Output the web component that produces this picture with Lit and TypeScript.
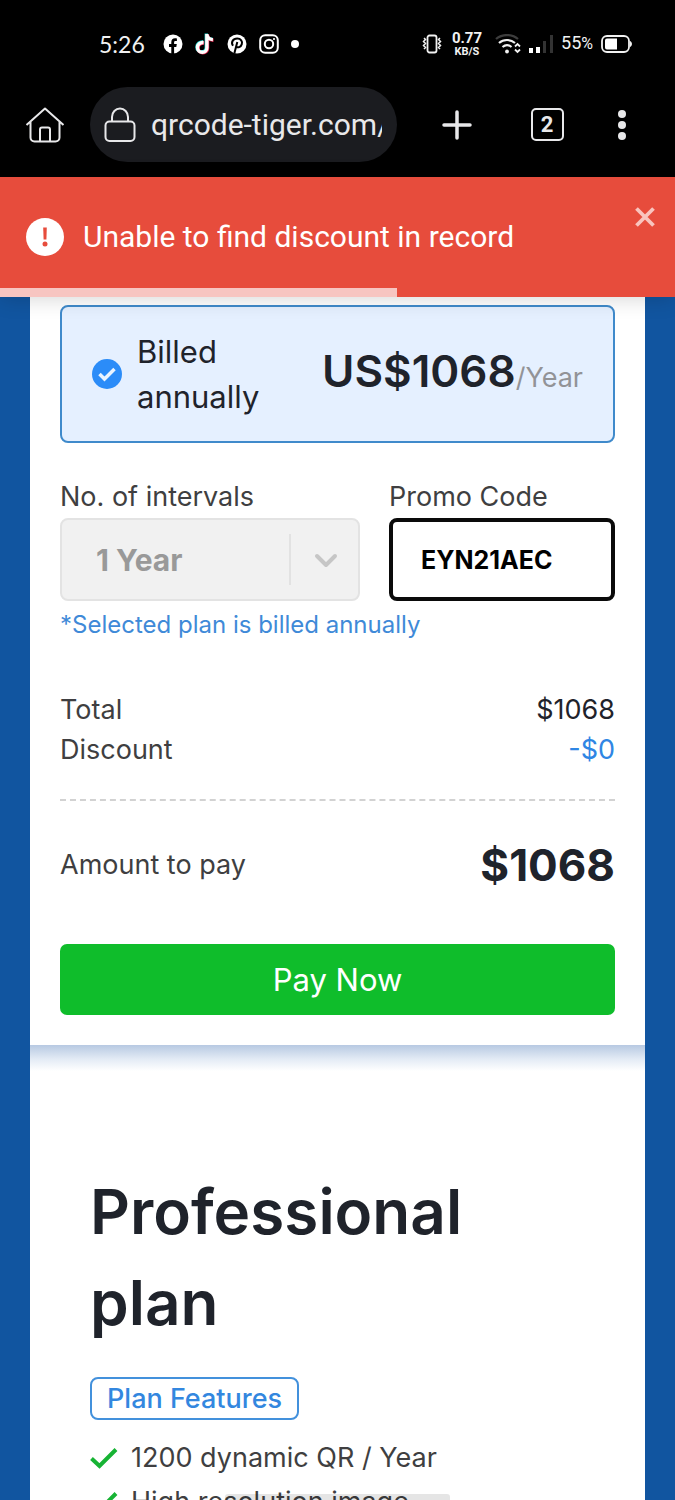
import { LitElement, html, css } from "lit";
import { customElement, property, state } from "lit/decorators.js";
import { styleMap } from "lit/directives/style-map.js";

@customElement("status-bar")
class StatusBar extends LitElement {
  static styles = css`
    :host {
      display: flex;
      align-items: center;
      justify-content: space-between;
      height: 87px;
      box-sizing: border-box;
      padding: 0 43px 0 99px;
      background: #000;
      color: #f2f2f2;
      font-family: Lato, sans-serif;
    }
    .group { display: flex; align-items: center; gap: 12px; }
    .group.end { gap: 8px; }
    svg { display: block; flex: none; }
    .time { font-size: 23px; line-height: 28px; margin-right: 6px; }
    .speed {
      display: flex;
      flex-direction: column;
      align-items: center;
      font: 700 15px/15px Roboto, sans-serif;
      margin: 0 5px 0 2px;
    }
    .speed small { font-size: 11px; line-height: 11px; }
    .percent { font: 400 18px/22px Roboto, sans-serif; }
    .percent small { font-size: 16px; }
  `;
  render() {
    return html`
      <div class="group">
        <span class="time">5:26</span>
        <svg width="20" height="20" viewBox="0 0 20 20" aria-label="Facebook">
          <circle cx="10" cy="10" r="9.5" fill="#fff" />
          <path d="M8.300 20v-7H6v-3h2.300V8.200c0-2.600 1.400-3.900 3.700-3.900.8 0 1.600.1 1.900.2v2.600h-1.300c-1.200 0-1.500.6-1.500 1.400V10h2.700l-.5 3h-2.200v7z" fill="#000" />
        </svg>
        <svg width="20" height="22" viewBox="0 0 20 22" aria-label="TikTok">
          <g fill="none" stroke-width="3.400">
            <path d="M8.500 9.500c-3-.3-6 1.700-6 5 0 3 2.300 4.800 4.700 4.800 2.700 0 4.700-2 4.700-4.600V1c.2 3.400 2.600 5.400 6 5.600" stroke="#25d9d3" transform="translate(-.6 -.5)" />
            <path d="M8.500 9.500c-3-.3-6 1.700-6 5 0 3 2.300 4.800 4.700 4.800 2.700 0 4.700-2 4.700-4.600V1c.2 3.400 2.600 5.400 6 5.600" stroke="#ee2950" transform="translate(.6 .6)" />
            <path d="M8.500 9.500c-3-.3-6 1.700-6 5 0 3 2.300 4.800 4.700 4.800 2.700 0 4.700-2 4.700-4.600V1c.2 3.400 2.600 5.400 6 5.600" stroke="#fff" />
          </g>
        </svg>
        <svg width="20" height="20" viewBox="0 0 20 20" aria-label="Pinterest">
          <circle cx="10" cy="10" r="9.500" fill="#fff" />
          <path d="M6 11.800C3.600 8.300 6 4.600 10.200 4.600c3.700 0 5.500 2.600 4.600 5.500-.9 3.100-4.100 4.200-5.600 2.200M10.300 8 7.300 19.500" fill="none" stroke="#000" stroke-width="2" />
        </svg>
        <svg width="20" height="20" viewBox="0 0 20 20" fill="none" stroke="#fff" stroke-width="2" aria-label="Instagram">
          <rect x="1.200" y="1.200" width="17.600" height="17.600" rx="5" />
          <circle cx="10" cy="10" r="4.200" />
          <circle cx="15" cy="5" r=".5" stroke-width="1.200" />
        </svg>
        <svg width="8" height="8" viewBox="0 0 8 8"><circle cx="4" cy="4" r="4" fill="#fff" /></svg>
      </div>
      <div class="group end">
        <svg width="20" height="20" viewBox="0 0 20 20" fill="none" stroke="#f2f2f2" aria-label="Vibrate">
          <rect x="5.500" y="1.500" width="9" height="17" rx="2" stroke-width="1.800" />
          <path d="m2 4 1.500 1.500L1.500 7.500l2 2-2 2 2 2L2 15M18 4l-1.500 1.500 2 2-2 2 2 2-2 2L18 15" stroke-width="1.500" />
        </svg>
        <span class="speed"><span>0.77</span><small>KB/S</small></span>
        <svg width="26" height="20" viewBox="0 0 26 20" fill="none" stroke-width="2.200" aria-label="Wi-Fi">
          <path d="M1 5c6-5.300 16-5.300 22 0" stroke="#3d3d3d" />
          <path d="M4 9c4.500-4 11.500-4 16 0M7.500 13c3-2.600 6-2.600 9 0" stroke="#f2f2f2" />
          <circle cx="12" cy="17.500" r="1.900" fill="#f2f2f2" />
          <path d="m20 12.500 2.500-2.500 2.500 2.500M20 15.500l2.500 2.500 2.500-2.500" stroke="#f2f2f2" stroke-width="1.800" />
        </svg>
        <svg width="24" height="20" viewBox="0 0 24 20" aria-label="Signal">
          <path d="M0 14h4v5H0zM7 13h4v6H7z" fill="#fff" />
          <path d="M14 7h3v12h-3zM21 1h3v18h-3z" fill="#333" />
        </svg>
        <span class="percent">55<small>%</small></span>
        <svg width="31" height="20" viewBox="0 0 31 20" aria-label="Battery">
          <rect x="1" y="2" width="27" height="16" rx="5" fill="none" stroke="#f2f2f2" stroke-width="1.800" />
          <path d="M6 4.500h10v11H6a2 2 0 0 1-2-2v-7a2 2 0 0 1 2-2z" fill="#fff" />
          <path d="M29 7c2.600 1 2.600 5 0 6z" fill="#f2f2f2" />
        </svg>
      </div>
    `;
  }
}

@customElement("browser-bar")
class BrowserBar extends LitElement {
  @property() url = "";
  @property({ type: Number }) tabs = 1;
  static styles = css`
    :host {
      display: flex;
      align-items: center;
      box-sizing: border-box;
      padding: 0 23px 15px 25px;
      background: #000;
      color: #e8e8ea;
    }
    svg { display: block; flex: none; }
    button {
      display: flex;
      align-items: center;
      justify-content: center;
      flex: none;
      width: 90px;
      height: 60px;
      padding: 0;
      border: 0;
      background: none;
      color: inherit;
    }
    .home { width: 40px; margin-right: 25px; }
    .menu { width: 60px; }
    .address {
      display: flex;
      align-items: center;
      gap: 15px;
      flex: 1;
      min-width: 0;
      height: 75px;
      box-sizing: border-box;
      margin-right: 15px;
      padding: 0 15px 0 14px;
      border-radius: 38px;
      background: #1b1c20;
    }
    .address input {
      flex: 1;
      min-width: 0;
      padding: 0;
      border: 0;
      outline: 0;
      background: none;
      color: inherit;
      font: 400 30px/40px Roboto, sans-serif;
    }
    .count {
      width: 33px;
      height: 33px;
      box-sizing: border-box;
      border: 2px solid currentColor;
      border-radius: 5px;
      font: 700 22px/30px Roboto, sans-serif;
    }
  `;
  render() {
    return html`
      <button class="home" aria-label="Home">
        <svg width="40" height="36" viewBox="0 0 40 36" fill="none" stroke="currentColor" stroke-width="2" stroke-linejoin="round">
          <path d="M1.500 18 20 1.500 38.500 18M5.500 15v15.500a4 4 0 0 0 4 4h21a4 4 0 0 0 4-4V15M15 34.500V22.500a2 2 0 0 1 2-2h6a2 2 0 0 1 2 2v12" />
        </svg>
      </button>
      <div class="address">
        <svg width="32" height="36" viewBox="0 0 32 36" fill="none" stroke="currentColor" stroke-width="2">
          <rect x="1.500" y="14.500" width="29" height="19.500" rx="4" />
          <path d="M8 14.500V10a8 8.500 0 0 1 16 0v4.500" />
        </svg>
        <input type="text" aria-label="Address" .value=${this.url} readonly />
      </div>
      <button aria-label="New tab">
        <svg width="30" height="30" viewBox="0 0 30 30" stroke="currentColor" stroke-width="3.500" stroke-linecap="round">
          <path d="M15 2v26M2 15h26" />
        </svg>
      </button>
      <button aria-label="Tabs"><span class="count">${this.tabs}</span></button>
      <button class="menu" aria-label="Menu">
        <svg width="8" height="32" viewBox="0 0 8 32" fill="currentColor">
          <circle cx="4" cy="5" r="4" /><circle cx="4" cy="16" r="4" /><circle cx="4" cy="27" r="4" />
        </svg>
      </button>
    `;
  }
}

@customElement("toast-message")
class ToastMessage extends LitElement {
  @property() message = "";
  @property({ type: Number }) progress = 0;
  static styles = css`
    :host {
      display: flex;
      align-items: center;
      position: relative;
      z-index: 1;
      box-sizing: border-box;
      min-height: 120px;
      padding: 0 25px;
      background: #e74c3c;
      color: #fff;
      box-shadow: 0 2px 20px rgba(0, 0, 0, 0.16);
      font: 400 30px/40px Roboto, sans-serif;
    }
    svg { display: block; }
    .text { flex: 1; margin-left: 18px; }
    .close {
      align-self: flex-start;
      margin: 26px -9px 0 0;
      padding: 3px;
      border: 0;
      background: none;
      color: #f9c4be;
    }
    .track { position: absolute; left: 0; bottom: 0; height: 9px; background: #f7c5c1; }
  `;
  render() {
    return html`
      <svg width="40" height="40" viewBox="0 0 40 40">
        <circle cx="20" cy="20" r="19" fill="#fff" />
        <path d="M18.200 10.500h3.600l-.4 12h-2.800z" fill="#e74c3c" />
        <circle cx="20" cy="27" r="2.500" fill="#e74c3c" />
      </svg>
      <span class="text" role="alert">${this.message}</span>
      <button class="close" aria-label="Close">
        <svg width="22" height="22" viewBox="0 0 22 22" stroke="currentColor" stroke-width="3.800">
          <path d="m2.500 2.500 17 17m0-17-17 17" />
        </svg>
      </button>
      <div class="track" style=${styleMap({ width: `${this.progress}%` })}></div>
    `;
  }
}

@customElement("checkout-card")
class CheckoutCard extends LitElement {
  @state() private promo = "EYN21AEC";
  static styles = css`
    :host {
      display: block;
      padding: 8px 30px 30px;
      background: #fff;
      color: #3f3f41;
      font-size: 27px;
      line-height: 40px;
    }
    .plan {
      display: flex;
      align-items: center;
      gap: 15px;
      box-sizing: border-box;
      padding: 22px 30px;
      border: 2px solid #3f8acb;
      border-radius: 8px;
      background: #e5f0ff;
      color: #1f232b;
      font-size: 31px;
      line-height: 45px;
    }
    .plan input { position: absolute; opacity: 0; pointer-events: none; }
    svg { display: block; flex: none; }
    .term { flex: 1; }
    .price { white-space: nowrap; }
    .price strong { font-size: 44px; font-weight: 600; }
    .price span { font-size: 27px; color: #929397; }
    .fields {
      display: grid;
      grid-template-columns: 300fr 226fr;
      column-gap: 29px;
      margin-top: 34px;
    }
    .fields label { display: block; height: 41px; }
    .select { position: relative; }
    select, .promo {
      display: block;
      width: 100%;
      height: 83px;
      box-sizing: border-box;
      margin: 0;
      border-radius: 8px;
      font-family: inherit;
      font-weight: 700;
    }
    select {
      appearance: none;
      padding: 0 80px 0 34px;
      border: 2px solid #e3e3e3;
      background: #f1f1f1;
      color: #999;
      opacity: 1;
      font-size: 30px;
    }
    .arrow {
      position: absolute;
      top: 16px;
      right: 0;
      bottom: 16px;
      display: flex;
      align-items: center;
      justify-content: center;
      width: 71px;
      box-sizing: border-box;
      border-left: 2px solid #e2e2e2;
      pointer-events: none;
    }
    .promo {
      padding: 0 28px;
      border: 4px solid #0a0a0a;
      background: #fff;
      color: #000;
      outline: 0;
      font-size: 25px;
    }
    .note { margin: 4px 0 0; color: #3f8ad8; font-size: 24px; }
    .row { display: flex; align-items: center; justify-content: space-between; }
    .totals { margin-top: 45px; }
    .value { color: #1f232b; }
    .discount { color: #2f86e4; }
    hr { margin: 29px 0; border: 0; border-top: 2px dashed #d2d2d2; }
    .amount { height: 70px; }
    .amount strong { color: #1f232b; font-size: 44px; font-weight: 700; }
    .pay {
      display: block;
      width: 100%;
      margin: 44px 0 0;
      padding: 13px;
      border: 0;
      border-radius: 7px;
      background: #0fbd2b;
      color: #fff;
      font: inherit;
      font-size: 31px;
      line-height: 45px;
    }
  `;
  render() {
    return html`
      <label class="plan">
        <input type="radio" name="billing" checked />
        <svg width="30" height="30" viewBox="0 0 30 30">
          <circle cx="15" cy="15" r="15" fill="#2b8cf8" />
          <path d="m7.500 15 5 5L22.500 10" fill="none" stroke="#eaf4ff" stroke-width="3.500" />
        </svg>
        <span class="term">Billed<br />annually</span>
        <span class="price"><strong>US$1068</strong><span>/Year</span></span>
      </label>
      <div class="fields">
        <div>
          <label for="intervals">No. of intervals</label>
          <div class="select">
            <select id="intervals" disabled><option>1 Year</option></select>
            <span class="arrow">
              <svg width="24" height="16" viewBox="0 0 24 16" fill="none" stroke="#c6c6c6" stroke-width="4" stroke-linecap="round" stroke-linejoin="round">
                <path d="m3 4 9 9 9-9" />
              </svg>
            </span>
          </div>
        </div>
        <div>
          <label for="promo">Promo Code</label>
          <input id="promo" class="promo" type="text" .value=${this.promo} />
        </div>
      </div>
      <p class="note">*Selected plan is billed annually</p>
      <div class="totals">
        <div class="row"><span>Total</span><span class="value">$1068</span></div>
        <div class="row"><span>Discount</span><span class="discount">-$0</span></div>
      </div>
      <hr />
      <div class="row amount"><span>Amount to pay</span><strong>$1068</strong></div>
      <button class="pay">Pay Now</button>
    `;
  }
}

@customElement("plan-features")
class PlanFeatures extends LitElement {
  @property({ attribute: false }) features: string[] = [];
  static styles = css`
    :host {
      display: block;
      padding: 121px 60px 40px;
      background: linear-gradient(#b7c9e2, #e3ebf5 14px, #fff 26px);
      color: #3f3f41;
      font-size: 27px;
    }
    h1 { margin: 0; color: #1f232b; font-size: 62px; line-height: 91px; font-weight: 600; }
    .badge {
      display: inline-block;
      margin-top: 29px;
      padding: 0 15px;
      border: 2px solid #4391dc;
      border-radius: 8px;
      color: #3387df;
      line-height: 39px;
      font-weight: 500;
    }
    ul { margin: 16px 0 0; padding: 0; list-style: none; }
    li { display: flex; align-items: center; gap: 13px; line-height: 44px; }
    svg { flex: none; }
  `;
  render() {
    return html`
      <h1>Professional plan</h1>
      <span class="badge">Plan Features</span>
      <ul>
        ${this.features.map(
          (f) => html`<li>
            <svg width="28" height="22" viewBox="0 0 28 22" fill="none" stroke="#17b334" stroke-width="4">
              <path d="m1.500 11.500 8 7.500L26 2.500" />
            </svg>
            <span>${f}</span>
          </li>`
        )}
      </ul>
    `;
  }
}

@customElement("app-root")
class AppRoot extends LitElement {
  static styles = css`
    :host {
      display: flex;
      flex-direction: column;
      position: relative;
      height: 100vh;
      overflow: hidden;
      background: #1155a0;
      font-family: Inter, sans-serif;
    }
    status-bar, browser-bar, toast-message { flex: none; }
    main { flex: 1; min-height: 0; overflow: hidden; padding: 0 30px; }
    .gesture {
      position: absolute;
      left: 33.333%;
      bottom: 0;
      width: 33.333%;
      height: 6px;
      border-radius: 3px 3px 0 0;
      background: rgba(0, 0, 0, 0.1);
    }
  `;
  render() {
    return html`
      <status-bar></status-bar>
      <browser-bar url="qrcode-tiger.com/" tabs="2"></browser-bar>
      <toast-message message="Unable to find discount in record" progress="58.8"></toast-message>
      <main>
        <checkout-card></checkout-card>
        <plan-features .features=${["1200 dynamic QR / Year", "High resolution image"]}></plan-features>
      </main>
      <div class="gesture"></div>
    `;
  }
}
